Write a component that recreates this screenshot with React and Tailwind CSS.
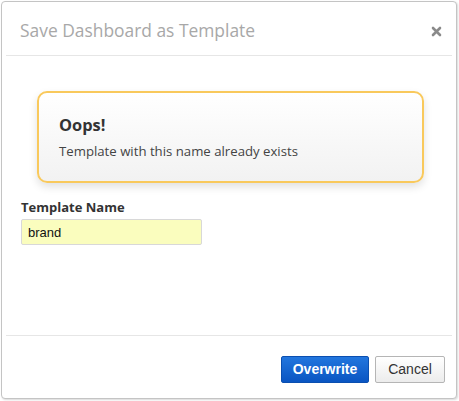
export default function App() {
  return (
    <div className="w-[459px] h-[401px] bg-white pl-[1px] pt-[1px]">
      <div className="w-[456px] h-[398px] border border-[#c4c4c4] rounded-[4px] bg-white flex flex-col shadow-[1px_1px_2px_rgba(0,0,0,0.15)]">
        {/* header */}
        <div className="h-[53px] flex items-center justify-between pl-[18px] pr-[14px] pt-[4px]">
          <h1 className="text-[17.4px] text-[#a8a8a8] font-['Open_Sans',sans-serif]">
            Save Dashboard as Template
          </h1>
          <svg width="11" height="11" viewBox="0 0 11 11" className="mt-[1px]">
            <path d="M2 2 L9 9 M9 2 L2 9" stroke="#8a8a8a" strokeWidth="2.6" strokeLinecap="round" />
          </svg>
        </div>
        <div className="mx-[4px] border-b border-[#e6e6e6]" />

        {/* body */}
        <div className="flex-1 px-[19px] pt-[35px] font-['Open_Sans',sans-serif]">
          <div className="ml-[16px] w-[387px] h-[92px] rounded-[10px] border-2 border-[#f9c95c] bg-gradient-to-b from-white to-[#f2f2f2] shadow-[0_4px_8px_rgba(0,0,0,0.12)] pl-[20px] pt-[21px]">
            <h2 className="text-[16.4px] font-bold text-[#333] leading-[22px]">Oops!</h2>
            <p className="text-[13.2px] text-[#444] mt-[6px] leading-[18px]">
              Template with this name already exists
            </p>
          </div>
          <label className="block mt-[15px] text-[13px] font-bold text-[#333] leading-[18px]">
            Template Name
          </label>
          <input
            defaultValue="brand"
            className="mt-[3px] w-[181px] h-[26px] border border-[#d8d8d8] rounded-[2px] bg-[#fafdbe] px-[6px] text-[13px] text-[#111] font-['Liberation_Sans',Arial,sans-serif] outline-none"
          />
        </div>

        {/* footer */}
        <div className="mx-[4px] border-b border-[#e6e6e6]" />
        <div className="h-[62px] flex items-start justify-end gap-[6px] pr-[11px] pt-[20px] font-['Liberation_Sans',Arial,sans-serif]">
          <button className="w-[88px] h-[27px] rounded-[2px] border border-[#0b4fb0] bg-gradient-to-b from-[#2276de] to-[#0a55c2] text-white text-[14px] font-bold">
            Overwrite
          </button>
          <button className="w-[70px] h-[27px] rounded-[2px] border border-[#b5b5b5] bg-gradient-to-b from-white to-[#ececec] text-[#333] text-[14px]">
            Cancel
          </button>
        </div>
      </div>
    </div>
  );
}
